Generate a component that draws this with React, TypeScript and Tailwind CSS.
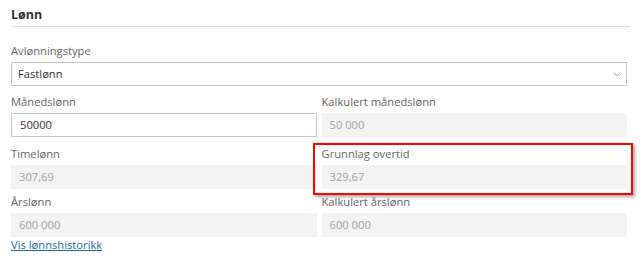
import React from "react";

const font = { fontFamily: '"Open Sans", "Noto Sans", sans-serif' };

function Label({ text, mt }: { text: string; mt: string }) {
  return (
    <div className={`${mt} pb-[3px] text-[11.2px] leading-[16px] text-[#666666]`}>{text}</div>
  );
}

function ReadOnly({ value }: { value: string }) {
  return (
    <div className="h-[24px] bg-[#f3f3f3] pl-[8px] text-[11.2px] leading-[24px] text-[#a0a0a0]">{value}</div>
  );
}

export default function App() {
  return (
    <div className="relative h-[270px] w-[640px] bg-white" style={font}>
      <div className="pl-[11px]">
        <div className="w-[619px] border-b border-[#dedede] pt-[6px] pb-[2px] text-[12.5px] font-bold leading-[18px] text-[#333333]">
          Lønn
        </div>
        <div className="w-[616px]">
          <Label text="Avlønningstype" mt="mt-[16px]" />
          <div className="flex h-[24px] items-center justify-between border border-[#c6c6c6] bg-white pl-[6px] pr-[5px] text-[11.2px] text-[#333333]">
            <span>Fastlønn</span>
            <svg width="8" height="5" viewBox="0 0 8 5" className="mt-[1px]">
              <polyline points="0.5,0.5 4,4 7.5,0.5" fill="none" stroke="#9a9a9a" strokeWidth="1" />
            </svg>
          </div>
          <div className="grid grid-cols-2 gap-x-[5px]">
            <div>
              <Label text="Månedslønn" mt="mt-[8px]" />
              <div className="h-[24px] border border-[#c6c6c6] bg-white pl-[8px] text-[11.2px] leading-[22px] text-[#333333]">
                50000
              </div>
            </div>
            <div>
              <Label text="Kalkulert månedslønn" mt="mt-[8px]" />
              <ReadOnly value="50 000" />
            </div>
            <div>
              <Label text="Timelønn" mt="mt-[9px]" />
              <ReadOnly value="307,69" />
            </div>
            <div>
              <Label text="Grunnlag overtid" mt="mt-[9px]" />
              <ReadOnly value="329,67" />
            </div>
            <div>
              <Label text="Årslønn" mt="mt-[5px]" />
              <ReadOnly value="600 000" />
            </div>
            <div>
              <Label text="Kalkulert årslønn" mt="mt-[5px]" />
              <ReadOnly value="600 000" />
            </div>
          </div>
          <a href="#" className="block text-[11.2px] leading-[16px] text-[#1a6aa5] underline">
            Vis lønnshistorikk
          </a>
        </div>
      </div>
      <div className="absolute left-[313px] top-[143px] h-[52px] w-[320px] border-2 border-[#ff0000] shadow-[2px_2px_3px_rgba(0,0,0,0.35)]" />
    </div>
  );
}
